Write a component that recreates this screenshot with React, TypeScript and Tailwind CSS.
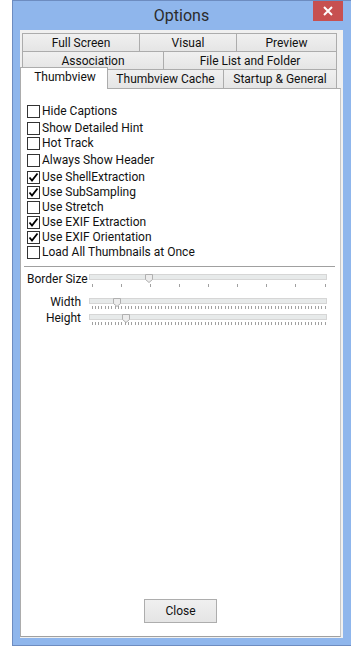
import React from "react";

const font = "font-['Segoe_UI',Roboto,'Liberation_Sans',sans-serif]";

const options = [
  { label: "Hide Captions", checked: false, gap: false },
  { label: "Show Detailed Hint", checked: false, gap: true },
  { label: "Hot Track", checked: false, gap: false },
  { label: "Always Show Header", checked: false, gap: true },
  { label: "Use ShellExtraction", checked: true, gap: true },
  { label: "Use SubSampling", checked: true, gap: false },
  { label: "Use Stretch", checked: false, gap: false },
  { label: "Use EXIF Extraction", checked: true, gap: false },
  { label: "Use EXIF Orientation", checked: true, gap: false },
  { label: "Load All Thumbnails at Once", checked: false, gap: false },
];

function CheckBox({ checked }: { checked: boolean }) {
  return (
    <div className="w-[13px] h-[13px] border border-[#333] bg-white flex items-center justify-center shrink-0">
      {checked ? (
        <svg width="11" height="11" viewBox="0 0 11 11">
          <path d="M1.5 5.5 L4 8.5 L9.5 1.5" fill="none" stroke="#000" strokeWidth="1.8" />
        </svg>
      ) : null}
    </div>
  );
}

function Slider({ pos, ticks, height, tickTop }: { pos: number; ticks: number; height: number; tickTop: number }) {
  const w = 238;
  const xs: number[] = [];
  for (let i = 0; i < ticks; i++) xs.push(2.5 + ((w - 5) * i) / (ticks - 1));
  return (
    <svg width={w} height={height} className="shrink-0">
      <rect x="0.5" y="0.5" width={w - 1} height="5" fill="#e7eaea" stroke="#d6d6d6" />
      <path
        d={`M${pos - 3.5} 0.5 H${pos + 3.5} V5.5 L${pos} 8.5 L${pos - 3.5} 5.5 Z`}
        fill="#ececec"
        stroke="#b0b0b0"
      />
      {xs.map((x, i) => (
        <line key={i} x1={Math.round(x) + 0.5} x2={Math.round(x) + 0.5} y1={tickTop} y2={tickTop + 3} stroke="#a0a0a0" />
      ))}
    </svg>
  );
}

function Tab({ label, className }: { label: string; className: string }) {
  return (
    <div
      className={`flex items-center justify-center border-t border-[#acacac] bg-gradient-to-b from-[#f0f0f0] to-[#e5e5e5] text-[12px] text-[#111] ${className}`}
    >
      {label}
    </div>
  );
}

export default function App() {
  return (
    <div className={`w-[351px] h-[646px] bg-white flex pl-[12px] overflow-hidden ${font}`}>
      <div className="flex-1 flex flex-col bg-[#8fb6ec] border-l border-t border-b border-[#6d8cc0] pl-[7px] pr-[8px] pb-[7px]">
        <div className="h-[29px] relative flex items-center justify-center">
          <span className="text-[16px] text-[#2b2b2b] mt-[1px]">Options</span>
          <div className="absolute right-0 top-0 w-[30px] h-[20px] bg-[#c75050] flex items-center justify-center">
            <svg width="10" height="10" viewBox="0 0 10 10">
              <path d="M1 1 L9 9 M9 1 L1 9" stroke="#fff" strokeWidth="2" />
            </svg>
          </div>
        </div>

        <div className="flex-1 flex flex-col bg-[#f0f0f0] pt-[3px] pr-[2px] pb-[1px]">
          <div className="flex flex-col pl-[2px]">
            <div className="flex h-[18px]">
              <Tab label="Full Screen" className="w-[117px] border-l" />
              <Tab label="Visual" className="w-[97px] border-l" />
              <Tab label="Preview" className="w-[101px] border-l border-r" />
            </div>
            <div className="flex h-[18px]">
              <Tab label="Association" className="w-[141px] border-l" />
              <Tab label="File List and Folder" className="w-[174px] border-l border-r" />
            </div>
            <div className="flex h-[19px] items-start">
              <div className="relative z-10 w-[88px] h-[22px] -ml-[2px] -mt-[2px] bg-white border-t border-l border-r border-[#acacac] flex items-center justify-center pl-[2px] pb-[3px] text-[12px] text-[#111]">
                Thumbview
              </div>
              <Tab label="Thumbview Cache" className="w-[115px] h-[19px]" />
              <Tab label="Startup & General" className="w-[114px] h-[19px] border-l border-r" />
            </div>
          </div>

          <div className="flex-1 flex flex-col bg-white border border-[#acacac] border-r-[#c8c8c8] border-b-[#a0a0a0]">
            <div className="flex flex-col pl-[6px] pt-[15px]">
              {options.map((o) => (
                <div key={o.label} className={`flex items-center h-[15px] gap-[2px] ${o.gap ? "mt-[2px]" : ""}`}>
                  <CheckBox checked={o.checked} />
                  <span className="text-[12px] leading-[15px] text-[#111] whitespace-nowrap">{o.label}</span>
                </div>
              ))}
            </div>

            <div className="mt-[6px] ml-[3px] mr-[5px] h-px bg-[#a0a0a0]" />

            <div className="flex flex-col pl-[6px] text-[12px] text-[#111]">
              <div className="flex mt-[5px] gap-[8px]">
                <span className="w-[54px] leading-[14px] whitespace-nowrap">Border Size</span>
                <div className="mt-[2px]">
                  <Slider pos={60} ticks={9} height={16} tickTop={10} />
                </div>
              </div>
              <div className="flex mt-[5px] gap-[8px]">
                <span className="w-[54px] leading-[14px] text-right">Width</span>
                <div className="mt-[3px]">
                  <Slider pos={28} ticks={71} height={12} tickTop={8} />
                </div>
              </div>
              <div className="flex mt-[1px] gap-[8px]">
                <span className="w-[54px] leading-[14px] text-right">Height</span>
                <div className="mt-[3px]">
                  <Slider pos={37} ticks={71} height={12} tickTop={8} />
                </div>
              </div>
            </div>

            <div className="flex-1" />

            <div className="self-center mb-[13px] w-[73px] h-[24px] border border-[#adadad] bg-gradient-to-b from-[#f0f0f0] to-[#e5e5e5] flex items-center justify-center text-[12px] text-[#111]">
              Close
            </div>
          </div>
        </div>
      </div>
    </div>
  );
}
